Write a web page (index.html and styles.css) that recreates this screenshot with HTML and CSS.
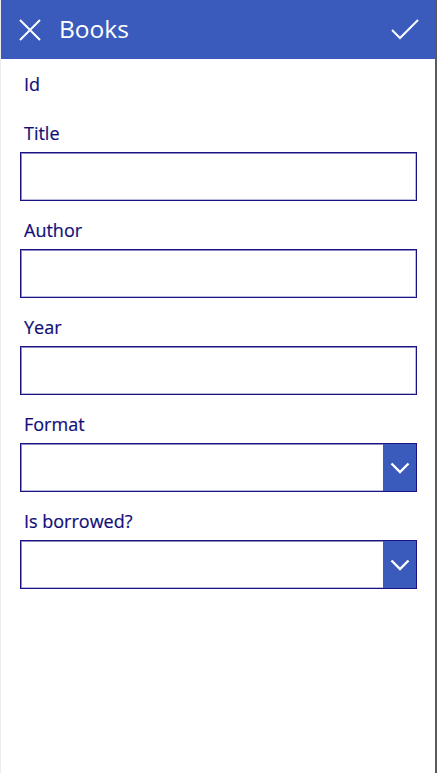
FILE: index.html
```html
<!DOCTYPE html>
<html>
<head>
<meta charset="utf-8">
<link rel="stylesheet" href="styles.css">
</head>
<body>
<div class="app">
  <header class="bar">
    <svg class="icon-x" width="22" height="22" viewBox="0 0 22 22"><path d="M1 1 L21 21 M21 1 L1 21" stroke="#fff" stroke-width="2" fill="none"/></svg>
    <span class="title">Books</span>
    <svg class="icon-check" width="28" height="22" viewBox="0 0 28 22"><path d="M1 12 L9 20 L27 2" stroke="#fff" stroke-width="2" fill="none"/></svg>
  </header>
  <main class="form">
    <div class="label id-label">Id</div>
    <div class="field">
      <div class="label">Title</div>
      <div class="box"></div>
    </div>
    <div class="field">
      <div class="label">Author</div>
      <div class="box"></div>
    </div>
    <div class="field">
      <div class="label">Year</div>
      <div class="box"></div>
    </div>
    <div class="field">
      <div class="label">Format</div>
      <div class="box select"><span class="fill"></span><span class="chev"><svg width="20" height="12" viewBox="0 0 20 12"><path d="M1.5 1.5 L10 10 L18.5 1.5" stroke="#fff" stroke-width="2.4" fill="none"/></svg></span></div>
    </div>
    <div class="field">
      <div class="label">Is borrowed?</div>
      <div class="box select"><span class="fill"></span><span class="chev"><svg width="20" height="12" viewBox="0 0 20 12"><path d="M1.5 1.5 L10 10 L18.5 1.5" stroke="#fff" stroke-width="2.4" fill="none"/></svg></span></div>
    </div>
  </main>
</div>
</body>
</html>
```
FILE: styles.css
```css
html, body {
  margin: 0;
  padding: 0;
  background: #fff;
}
body {
  font-family: "Open Sans", "Noto Sans", sans-serif;
}
.app {
  width: 437px;
  height: 773px;
  box-sizing: border-box;
  border-left: 1px solid #ececec;
  border-right: 2px solid #5a5a5a;
  display: flex;
  flex-direction: column;
}
.bar {
  height: 59px;
  background: #3a5bbc;
  display: flex;
  align-items: center;
  padding-left: 18px;
  padding-right: 16px;
  flex: none;
}
.icon-x {
  margin-top: 1px;
}
.title {
  color: #fff;
  font-size: 24.5px;
  margin-left: 18px;
  flex: 1;
  line-height: 1;
}
.icon-check {
  margin-top: -1px;
}
.form {
  padding: 13px 0 0 19px;
  display: flex;
  flex-direction: column;
  gap: 17px;
}
.label {
  color: #110e78;
  font-size: 18px;
  line-height: 24px;
  padding-left: 4px;
  -webkit-text-stroke: 0.2px #110e78;
}
.id-label {
  margin-bottom: 8px;
}
.field {
  display: flex;
  flex-direction: column;
  gap: 7px;
}
.box {
  width: 397px;
  height: 49px;
  box-sizing: border-box;
  border: 1px solid #1a1282;
  box-shadow: inset 0 1px 0 #8c8ac4, inset 1px 0 0 #8c8ac4, inset 0 -1px 0 #b9bce0, inset -1px 0 0 #b9bce0;
  background: #fff;
}
.select {
  display: flex;
}
.fill {
  flex: 1;
}
.chev {
  width: 33px;
  background: #3a5bbc;
  display: flex;
  align-items: center;
  justify-content: center;
}
```
